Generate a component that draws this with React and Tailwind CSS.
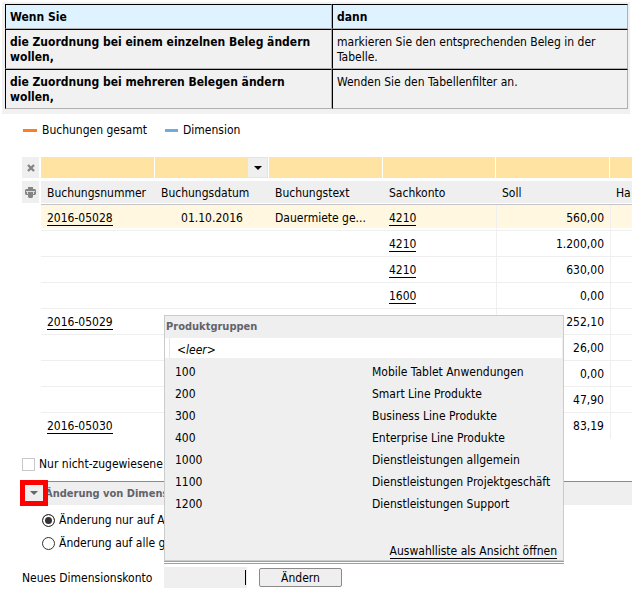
import React, { useState } from 'react';

const helpRows = [
  {
    when: 'die Zuordnung bei einem einzelnen Beleg ändern wollen,',
    then: 'markieren Sie den entsprechenden Beleg in der Tabelle.',
  },
  {
    when: 'die Zuordnung bei mehreren Belegen ändern wollen,',
    then: 'Wenden Sie den Tabellenfilter an.',
  },
];

const columns = [
  { label: 'Buchungsnummer', width: 'w-[114px]' },
  { label: 'Buchungsdatum', width: 'w-[114px]' },
  { label: 'Buchungstext', width: 'w-[114px]' },
  { label: 'Sachkonto', width: 'w-[113px]' },
  { label: 'Soll', width: 'w-[114px]' },
  { label: 'Ha', width: 'w-[114px]' },
];

const bookings = [
  { nr: '2016-05028', date: '01.10.2016', text: 'Dauermiete ge...', account: '4210', debit: '560,00' },
  { account: '4210', debit: '1.200,00' },
  { account: '4210', debit: '630,00' },
  { account: '1600', debit: '0,00' },
  { nr: '2016-05029', debit: '252,10' },
  { debit: '26,00' },
  { debit: '0,00' },
  { debit: '47,90' },
  { nr: '2016-05030', debit: '83,19' },
];

const productGroups = [
  { id: '100', name: 'Mobile Tablet Anwendungen' },
  { id: '200', name: 'Smart Line Produkte' },
  { id: '300', name: 'Business Line Produkte' },
  { id: '400', name: 'Enterprise Line Produkte' },
  { id: '1000', name: 'Dienstleistungen allgemein' },
  { id: '1100', name: 'Dienstleistungen Projektgeschäft' },
  { id: '1200', name: 'Dienstleistungen Support' },
];

const helpCell =
  'px-1 pt-[5px] pb-[3px] border border-t-black border-l-black border-b-[#b0b0b0] border-r-[#b0b0b0]';

const HelpTable = () => (
  <div className="bg-[#f1f1f1] mx-0.5 pt-0.5 pb-[5px] pl-[3px] pr-0.5">
    <table className="w-full table-fixed border-separate border-spacing-0 text-left">
      <thead>
        <tr className="bg-[#dff2ff]">
          <th className={`${helpCell} w-[327px] font-bold`}>Wenn Sie</th>
          <th className={`${helpCell} font-bold`}>dann</th>
        </tr>
      </thead>
      <tbody>
        {helpRows.map((row) => (
          <tr key={row.when} className="align-top">
            <th className={`${helpCell} font-bold`}>{row.when}</th>
            <td className={helpCell}>{row.then}</td>
          </tr>
        ))}
      </tbody>
    </table>
  </div>
);

const Legend = () => (
  <div className="flex items-center gap-[18px] pl-[23px] mt-[9px]">
    <span className="flex items-center gap-[5px]">
      <span className="w-[14px] h-[3px] bg-[#ff7f1e]" />
      Buchungen gesamt
    </span>
    <span className="flex items-center gap-[5px]">
      <span className="w-[13px] h-[3px] bg-[#74a9dc]" />
      Dimension
    </span>
  </div>
);

const CellLink = ({ children }) => (
  <a href="#beleg" className="border-b border-black">
    {children}
  </a>
);

const ArrowDown = ({ className }) => (
  <svg width="8" height="4" viewBox="0 0 8 4" className={className}>
    <path d="M0 0h8L4 4z" />
  </svg>
);

const BookingTable = () => (
  <div className="flex gap-0.5 pl-[22px] mt-[19px] overflow-hidden">
    {/* Table tools */}
    <div className="flex flex-col gap-[3px] shrink-0">
      <button type="button" aria-label="Filter löschen" className="w-[17px] h-[21px] bg-[#efefef] flex items-center justify-center">
        <svg width="8" height="8" viewBox="0 0 8 8" stroke="#858585" strokeWidth="2.4">
          <path d="M1 1l6 6M7 1l-6 6" />
        </svg>
      </button>
      <button type="button" aria-label="Drucken" className="w-[17px] h-[22px] bg-[#efefef] flex items-center justify-center">
        <svg width="11" height="12" viewBox="0 0 11 12">
          <path d="M3 1h5v2H3z" fill="#858585" />
          <path d="M1 3h9l1 1v4l-1 1H1L0 8V4z" fill="#858585" />
          <path d="M1 5h9v1H1zM2 6h1v2H2zM8 6h1v2H8z" fill="#dcdcdc" />
          <path d="M3 7h5v4l-1 1H4l-1-1z" fill="#858585" />
        </svg>
      </button>
    </div>

    <div className="grow min-w-0 overflow-hidden">
      <table className="w-[683px] table-fixed border-separate border-spacing-0 text-left">
        <thead>
          <tr>
            {columns.map((col) => (
              <td key={col.label} className={`${col.width} h-6 p-0 align-top border-r border-white`}>
                <div className="flex h-[21px] bg-[#ffe3a2]">
                  <input aria-label={`Filter ${col.label}`} className="w-full min-w-0 px-1.5 outline-none" />
                  {col.label === 'Buchungsdatum' && (
                    <button type="button" aria-label="Datum wählen" className="shrink-0 w-[19px] h-[19px] my-px mr-px bg-[#efefef] flex items-center justify-center">
                      <ArrowDown className="fill-black" />
                    </button>
                  )}
                </div>
              </td>
            ))}
          </tr>
          <tr>
            {columns.map((col) => (
              <th key={col.label} className="h-6 p-0 align-top font-normal border-b border-[#c4c4c8]">
                <div className="h-[22px] px-1.5 bg-[#efefef] leading-6">{col.label}</div>
              </th>
            ))}
          </tr>
        </thead>
        <tbody>
          {bookings.map((row, index) => {
            const cell = index === 0 ? 'h-[23px] px-1.5 leading-[26px] bg-[#fff7e0]' : 'h-[23px] px-1.5 leading-[26px]';
            const line = index < bookings.length - 1 ? 'h-[26px] p-0 align-top border-b border-[#efefef]' : 'h-[26px] p-0 align-top';
            return (
              <tr key={index}>
                <td className={line}>
                  <div className={cell}>{row.nr && <CellLink>{row.nr}</CellLink>}</div>
                </td>
                <td className={line}>
                  <div className={`${cell} text-center`}>{row.date}</div>
                </td>
                <td className={line}>
                  <div className={cell}>{row.text}</div>
                </td>
                <td className={line}>
                  <div className={cell}>{row.account && <CellLink>{row.account}</CellLink>}</div>
                </td>
                <td className={`${line} border-l border-[#efefef]`}>
                  <div className={`${cell} text-right`}>{row.debit}</div>
                </td>
                <td className={`${line} border-l border-[#efefef]`}>
                  <div className={cell} />
                </td>
              </tr>
            );
          })}
        </tbody>
      </table>
    </div>
  </div>
);

const GroupPopup = ({ onSelect }) => (
  <div className="absolute left-0 bottom-full mb-[3px] w-[400px]">
    <div className="border border-[#c8cccc] bg-[#efefef]">
      <div className="h-[22px] px-px text-[11px] leading-[22px] font-bold text-[#63636b]">Produktgruppen</div>
      <div className="bg-white h-5 pl-1 mr-px">
        <button type="button" onClick={() => onSelect('')} className="block h-5 w-full pl-[7px] text-left italic leading-6 border-l border-[#e6e6e6]">
          &lt;leer&gt;
        </button>
      </div>
      <ul className="pt-[3px]">
        {productGroups.map((group) => (
          <li key={group.id}>
            <button type="button" onClick={() => onSelect(group.id)} className="flex w-full h-[22px] items-center pl-2.5 text-left">
              <span className="w-[197px]">{group.id}</span>
              <span>{group.name}</span>
            </button>
          </li>
        ))}
      </ul>
      <div className="flex justify-end mt-[29px] pr-1.5 pb-px">
        <a href="#auswahlliste" className="border-b border-black leading-[14px]">
          Auswahlliste als Ansicht öffnen
        </a>
      </div>
    </div>
    <div className="h-[3px] bg-white border-y border-[#9a9acc]" />
  </div>
);

const radioClass =
  'appearance-none shrink-0 w-[13px] h-[13px] rounded-full bg-white border border-[#333] checked:bg-[#333] checked:shadow-[inset_0_0_0_2px_white]';

const ChangeForm = () => {
  const [scope, setScope] = useState('selection');
  const [account, setAccount] = useState('');

  return (
    <form className="mt-[17px] pl-[22px]">
      <label className="flex items-center gap-1 h-4">
        <input type="checkbox" className="appearance-none shrink-0 w-[13px] h-[13px] bg-white border border-[#c8c8c8] checked:bg-[#63636b]" />
        Nur nicht-zugewiesene
      </label>

      <div className="relative flex items-center h-[24px] mt-[9px] mb-1 border-t border-[#8a8a8a] bg-[#efefef]">
        <h2 className="pl-[23px] text-[11px] font-bold text-[#63636b]">Änderung von Dimens</h2>
        {/* Highlighted collapse toggle */}
        <button type="button" aria-label="Bereich einklappen" className="absolute -left-0.5 -top-0.5 w-7 h-[26px] bg-[#efefef] border-[5px] border-[#ff0000] flex items-center justify-center">
          <ArrowDown className="fill-[#666]" />
        </button>
      </div>

      <label className="flex items-center gap-1 h-[23px] pl-5">
        <input type="radio" name="scope" checked={scope === 'selection'} onChange={() => setScope('selection')} className={radioClass} />
        Änderung nur auf A
      </label>
      <label className="flex items-center gap-1 h-[23px] pl-5">
        <input type="radio" name="scope" checked={scope === 'all'} onChange={() => setScope('all')} className={radioClass} />
        Änderung auf alle g
      </label>

      <div className="flex items-center mt-3">
        <label htmlFor="konto" className="w-[142px] pt-px">
          Neues Dimensionskonto
        </label>
        <div className="relative flex items-center w-[83px] h-[21px] bg-[#efefef]">
          <input id="konto" value={account} onChange={(e) => setAccount(e.target.value)} className="w-full min-w-0 h-[15px] mr-px px-1 outline-none border-r border-black" />
          <GroupPopup onSelect={setAccount} />
        </div>
        <button type="button" className="ml-3 w-[83px] h-[19px] rounded-xs border border-[#8a8a8a] bg-[#efefef] pt-px leading-none">
          Ändern
        </button>
      </div>
    </form>
  );
};

const App = () => (
  <main className="bg-white pt-0.5 text-black text-[12px] leading-[15px] font-['DejaVu_Sans_Condensed','Noto_Sans',sans-serif]">
    <HelpTable />
    <Legend />
    <BookingTable />
    <ChangeForm />
  </main>
);

export default App;
